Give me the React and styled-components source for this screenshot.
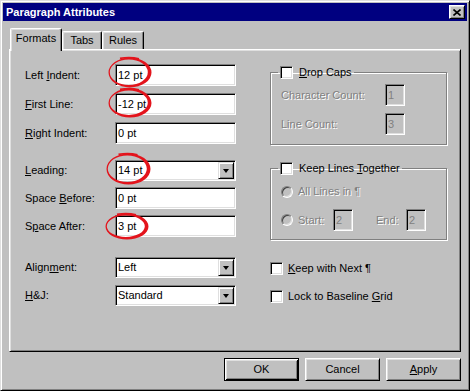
import React from "react";
import styled, { createGlobalStyle } from "styled-components";

const GlobalStyle = createGlobalStyle`
  html, body { margin: 0; padding: 0; background: #c0c0c0; }
  body { font-family: "Liberation Sans", Arial, sans-serif; font-size: 11px; color: #000; }
  u { text-decoration: underline; text-underline-offset: 1px; }
`;

const Window = styled.div`
  width: 470px;
  height: 391px;
  box-sizing: border-box;
  background: #c0c0c0;
  border: 1px solid;
  border-color: #dfdfdf #000 #000 #dfdfdf;
  box-shadow: inset 1px 1px 0 #fff, inset -1px -1px 0 #808080;
  padding: 2px;
  display: flex;
  flex-direction: column;
`;

const TitleBar = styled.div`
  height: 18px;
  flex: none;
  background: #000080;
  display: flex;
  align-items: center;
  padding-left: 3px;
  color: #fff;
  font-weight: bold;
  font-size: 11px;
  line-height: 13px;
`;

const CloseBtn = styled.div`
  margin-left: auto;
  margin-right: 2px;
  width: 16px;
  height: 14px;
  box-sizing: border-box;
  background: #c0c0c0;
  border: 1px solid;
  border-color: #fff #000 #000 #fff;
  box-shadow: inset 1px 1px 0 #dfdfdf, inset -1px -1px 0 #808080;
  display: flex;
  align-items: center;
  justify-content: center;
`;

const Content = styled.div`
  flex: 1;
  display: flex;
  flex-direction: column;
  padding: 0 6px;
  min-height: 0;
`;

const TabStrip = styled.div`
  margin-top: 7px;
  height: 21px;
  flex: none;
  display: flex;
  align-items: flex-end;
  padding-left: 1px;
`;

const Tab = styled.div`
  box-sizing: border-box;
  width: ${(p) => p.$w}px;
  height: ${(p) => (p.$active ? 23 : 18)}px;
  margin-bottom: ${(p) => (p.$active ? -2 : 0)}px;
  position: relative;
  z-index: ${(p) => (p.$active ? 1 : 0)};
  background: #c0c0c0;
  border-top: 1px solid #fff;
  border-left: 1px solid #fff;
  border-right: 1px solid #000;
  border-radius: 2px 2px 0 0;
  box-shadow: inset -1px 0 0 #808080, inset 1px 1px 0 #dfdfdf;
  display: flex;
  justify-content: center;
  align-items: ${(p) => (p.$active ? "flex-start" : "center")};
  padding-top: ${(p) => (p.$active ? 3 : 0)}px;
  line-height: 13px;
`;

const Panel = styled.div`
  flex: 1;
  box-sizing: border-box;
  border: 1px solid;
  border-color: #fff #000 #000 #fff;
  box-shadow: inset 1px 1px 0 #dfdfdf, inset -1px -1px 0 #808080;
  padding: 14px 0 0 15px;
  display: flex;
  gap: 34px;
`;

const LeftCol = styled.div`
  width: 211px;
  display: flex;
  flex-direction: column;
`;

const FieldRow = styled.div`
  display: flex;
  align-items: center;
  margin-top: ${(p) => p.$mt || 0}px;
`;

const Label = styled.div`
  width: 90px;
  line-height: 13px;
  white-space: nowrap;
`;

const FieldWrap = styled.div`
  position: relative;
  width: 121px;
`;

const TextBox = styled.div`
  box-sizing: border-box;
  width: 121px;
  height: 22px;
  background: #fff;
  border: 1px solid;
  border-color: #808080 #fff #fff #808080;
  box-shadow: inset 1px 1px 0 #000, inset -1px -1px 0 #dfdfdf;
  padding: 1px 2px;
  display: flex;
  align-items: center;
  line-height: 13px;
`;

const SelectBox = styled.div`
  box-sizing: border-box;
  width: 121px;
  height: 21px;
  background: #fff;
  border: 1px solid;
  border-color: #808080 #fff #fff #808080;
  box-shadow: inset 1px 1px 0 #000, inset -1px -1px 0 #dfdfdf;
  padding: 1px;
  display: flex;
`;

const SelectValue = styled.div`
  flex: 1;
  padding-left: 1px;
  display: flex;
  align-items: center;
  line-height: 13px;
`;

const DropBtn = styled.div`
  width: 16px;
  box-sizing: border-box;
  background: #c0c0c0;
  border: 1px solid;
  border-color: #dfdfdf #000 #000 #dfdfdf;
  box-shadow: inset 1px 1px 0 #fff, inset -1px -1px 0 #808080;
  display: flex;
  align-items: center;
  justify-content: center;
`;

const Arrow = styled.span`
  width: 0;
  height: 0;
  border-left: 3.5px solid transparent;
  border-right: 3.5px solid transparent;
  border-top: 4px solid #000;
  margin-top: 1px;
`;

const Mark = styled.svg`
  position: absolute;
  left: ${(p) => p.$x}px;
  top: ${(p) => p.$y}px;
  pointer-events: none;
  overflow: visible;
`;

const RightCol = styled.div`
  width: 177px;
  display: flex;
  flex-direction: column;
`;

const Group = styled.fieldset`
  margin: ${(p) => p.$mt}px 0 0 0;
  padding: 0;
  min-width: 0;
  border: 1px solid #808080;
  box-shadow: inset 1px 1px 0 #fff, 1px 1px 0 #fff;
`;

const Legend = styled.legend`
  margin-left: 7px;
  padding: 0 2px;
  display: flex;
  align-items: center;
  gap: 6px;
  line-height: 13px;
  height: 13px;
`;

const GroupBody = styled.div`
  padding: ${(p) => p.$pt}px 0 ${(p) => p.$pb}px 10px;
  display: flex;
  flex-direction: column;
`;

const OptRow = styled.div`
  display: flex;
  align-items: center;
  height: ${(p) => p.$h}px;
  margin-top: ${(p) => p.$mt || 0}px;
`;

const DimText = styled.span`
  color: #808080;
  text-shadow: 1px 1px 0 #fff;
  line-height: 13px;
  white-space: nowrap;
  width: ${(p) => (p.$w ? `${p.$w}px` : "auto")};
  margin-left: ${(p) => p.$ml || 0}px;
`;

const SmallBox = styled.div`
  box-sizing: border-box;
  width: 20px;
  height: 22px;
  background: #c0c0c0;
  border: 1px solid;
  border-color: #808080 #fff #fff #808080;
  box-shadow: inset 1px 1px 0 #000, inset -1px -1px 0 #dfdfdf;
  padding: 1px 2px;
  display: flex;
  align-items: center;
  color: #808080;
  line-height: 13px;
`;

const Radio = styled.span`
  width: 12px;
  height: 12px;
  box-sizing: border-box;
  border-radius: 50%;
  border: 1px solid;
  border-color: #808080 #fff #fff #808080;
  box-shadow: inset 1px 1px 0 #404040, inset -1px -1px 0 #dfdfdf;
  background: #c0c0c0;
  margin-right: 5px;
  flex: none;
`;

const Check = styled.span`
  width: 13px;
  height: 13px;
  box-sizing: border-box;
  background: #fff;
  border: 1px solid;
  border-color: #808080 #fff #fff #808080;
  box-shadow: inset 1px 1px 0 #000, inset -1px -1px 0 #dfdfdf;
  flex: none;
`;

const CheckRow = styled.div`
  display: flex;
  align-items: center;
  gap: 5px;
  height: 13px;
  margin-top: ${(p) => p.$mt}px;
  line-height: 13px;
  white-space: nowrap;
`;

const ButtonRow = styled.div`
  display: flex;
  justify-content: flex-end;
  gap: 6px;
  margin: 6px 0 7px;
  flex: none;
`;

const Button = styled.div`
  width: 75px;
  height: 23px;
  box-sizing: border-box;
  background: #c0c0c0;
  border: 1px solid;
  border-color: ${(p) => (p.$default ? "#000" : "#fff #000 #000 #fff")};
  box-shadow: ${(p) =>
    p.$default
      ? "inset 1px 1px 0 #fff, inset -1px -1px 0 #000, inset 2px 2px 0 #dfdfdf, inset -2px -2px 0 #808080"
      : "inset 1px 1px 0 #dfdfdf, inset -1px -1px 0 #808080"};
  display: flex;
  align-items: center;
  justify-content: center;
  line-height: 13px;
`;

function Ellipse({ x, y, w, h }) {
  const cx = w / 2;
  const cy = h / 2;
  const orx = w / 2 - 0.5;
  const ory = h / 2 - 0.5;
  const icx = cx - 1.2;
  const icy = cy - 0.3;
  const irx = w / 2 - 3;
  const iry = h / 2 - 2.8;
  const ell = (ecx, ecy, rx, ry) =>
    `M${ecx - rx},${ecy} a${rx},${ry} 0 1,0 ${2 * rx},0 a${rx},${ry} 0 1,0 ${-2 * rx},0 Z`;
  return (
    <Mark $x={x} $y={y} width={w} height={h} viewBox={`0 0 ${w} ${h}`}>
      <path
        fillRule="evenodd"
        fill="#e3141c"
        d={`${ell(cx, cy, orx, ory)} ${ell(icx, icy, irx, iry)}`}
      />
      <path
        d={`M${cx - 10},${1.4} Q${cx},${-0.6} ${cx + 9},${1.8}`}
        stroke="#e3141c"
        strokeWidth="1.6"
        fill="none"
      />
    </Mark>
  );
}

function TextField({ value, mark }) {
  return (
    <FieldWrap>
      <TextBox>{value}</TextBox>
      {mark && <Ellipse {...mark} />}
    </FieldWrap>
  );
}

function SelectField({ value, mark }) {
  return (
    <FieldWrap>
      <SelectBox>
        <SelectValue>{value}</SelectValue>
        <DropBtn>
          <Arrow />
        </DropBtn>
      </SelectBox>
      {mark && <Ellipse {...mark} />}
    </FieldWrap>
  );
}

export default function App() {
  return (
    <>
      <GlobalStyle />
      <Window>
        <TitleBar>
          Paragraph Attributes
          <CloseBtn>
            <svg width="8" height="7" viewBox="0 0 8 7">
              <path d="M0.5 0.5 L7.5 6.5 M7.5 0.5 L0.5 6.5" stroke="#000" strokeWidth="1.6" />
            </svg>
          </CloseBtn>
        </TitleBar>
        <Content>
          <TabStrip>
            <Tab $active $w={52}>Formats</Tab>
            <Tab $w={40}>Tabs</Tab>
            <Tab $w={42}>Rules</Tab>
          </TabStrip>
          <Panel>
            <LeftCol>
              <FieldRow>
                <Label>
                  Left <u>I</u>ndent:
                </Label>
                <TextField value="12 pt" mark={{ x: -7, y: -7, w: 44, h: 31 }} />
              </FieldRow>
              <FieldRow $mt={7}>
                <Label>
                  <u>F</u>irst Line:
                </Label>
                <TextField value="-12 pt" mark={{ x: -7, y: -5, w: 44, h: 30 }} />
              </FieldRow>
              <FieldRow $mt={7}>
                <Label>
                  <u>R</u>ight Indent:
                </Label>
                <TextField value="0 pt" />
              </FieldRow>
              <FieldRow $mt={16}>
                <Label>
                  <u>L</u>eading:
                </Label>
                <SelectField value="14 pt" mark={{ x: -9, y: -7, w: 45, h: 32 }} />
              </FieldRow>
              <FieldRow $mt={6}>
                <Label>
                  Space <u>B</u>efore:
                </Label>
                <TextField value="0 pt" />
              </FieldRow>
              <FieldRow $mt={6}>
                <Label>
                  S<u>p</u>ace After:
                </Label>
                <TextField value="3 pt" mark={{ x: -10, y: -2, w: 44, h: 27 }} />
              </FieldRow>
              <FieldRow $mt={20}>
                <Label>
                  Align<u>m</u>ent:
                </Label>
                <SelectField value="Left" />
              </FieldRow>
              <FieldRow $mt={7}>
                <Label>
                  <u>H</u>&amp;J:
                </Label>
                <SelectField value="Standard" />
              </FieldRow>
            </LeftCol>
            <RightCol>
              <Group $mt={2}>
                <Legend>
                  <Check />
                  <span>
                    <u>D</u>rop Caps
                  </span>
                </Legend>
                <GroupBody $pt={5} $pb={9}>
                  <OptRow $h={22}>
                    <DimText $w={104}>Character Count:</DimText>
                    <SmallBox>1</SmallBox>
                  </OptRow>
                  <OptRow $h={22} $mt={7}>
                    <DimText $w={104}>Line Count:</DimText>
                    <SmallBox>3</SmallBox>
                  </OptRow>
                </GroupBody>
              </Group>
              <Group $mt={17}>
                <Legend>
                  <Check />
                  <span>
                    Keep Lines <u>T</u>ogether
                  </span>
                </Legend>
                <GroupBody $pt={10} $pb={8}>
                  <OptRow $h={13}>
                    <Radio />
                    <DimText>All Lines in ¶</DimText>
                  </OptRow>
                  <OptRow $h={22} $mt={11}>
                    <Radio />
                    <DimText $w={35}>Start:</DimText>
                    <SmallBox>2</SmallBox>
                    <DimText $w={30} $ml={23}>
                      End:
                    </DimText>
                    <SmallBox>2</SmallBox>
                  </OptRow>
                </GroupBody>
              </Group>
              <CheckRow $mt={22}>
                <Check />
                <span>
                  <u>K</u>eep with Next ¶
                </span>
              </CheckRow>
              <CheckRow $mt={15}>
                <Check />
                <span>
                  Lock to Baseline <u>G</u>rid
                </span>
              </CheckRow>
            </RightCol>
          </Panel>
          <ButtonRow>
            <Button $default>OK</Button>
            <Button>Cancel</Button>
            <Button>
              <span>
                <u>A</u>pply
              </span>
            </Button>
          </ButtonRow>
        </Content>
      </Window>
    </>
  );
}
